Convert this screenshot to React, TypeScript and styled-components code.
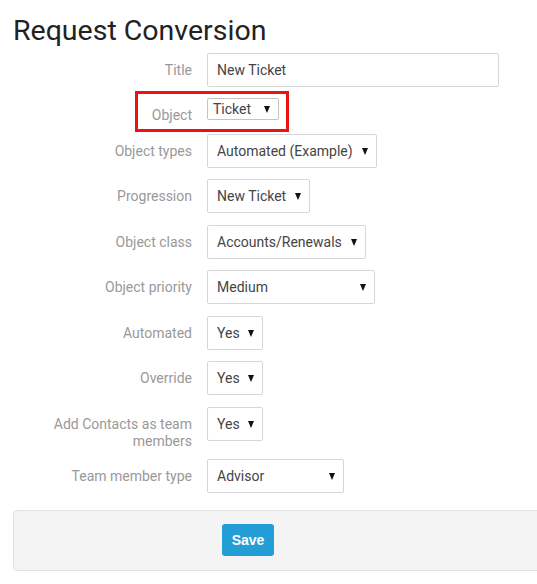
import React from "react";
import styled, { createGlobalStyle } from "styled-components";

const GlobalStyle = createGlobalStyle`
  html, body {
    margin: 0;
    padding: 0;
    background: #ffffff;
    font-family: Roboto, "Liberation Sans", Arial, sans-serif;
    overflow: hidden;
  }
`;

const Page = styled.div`
  width: 537px;
  height: 584px;
  overflow: hidden;
`;

const Heading = styled.h1`
  margin: 0;
  padding: 14px 0 0 13px;
  font-size: 28.5px;
  line-height: 33px;
  font-weight: 400;
  color: #222222;
`;

const Form = styled.form`
  margin-top: 6px;
  display: flex;
  flex-direction: column;
  gap: 11.5px;
`;

const Row = styled.div<{ $pull?: number }>`
  position: relative;
  display: grid;
  grid-template-columns: 192px 1fr;
  column-gap: 15px;
  align-items: start;
  margin-top: ${(p) => -(p.$pull ?? 0)}px;
`;

const Label = styled.label`
  padding-top: 9px;
  margin-bottom: -2px;
  text-align: right;
  font-size: 14px;
  line-height: 17px;
  color: #999999;
`;

const Control = styled.div<{ $w: number; $small?: boolean }>`
  box-sizing: border-box;
  width: ${(p) => p.$w}px;
  height: ${(p) => (p.$small ? 22 : 34)}px;
  display: flex;
  align-items: center;
  justify-content: space-between;
  padding: 0 8px 0 ${(p) => (p.$small ? 5 : 9)}px;
  border: 1px solid ${(p) => (p.$small ? "#c4c4c4" : "#d6d6d6")};
  border-radius: 2px;
  background: #ffffff;
  font-size: 14px;
  color: #444444;
  white-space: nowrap;
`;

const Arrow = styled.span`
  width: 0;
  height: 0;
  border-left: 3.5px solid transparent;
  border-right: 3.5px solid transparent;
  border-top: 7px solid #111111;
  margin-top: 1px;
`;

const Highlight = styled.div`
  position: absolute;
  left: 135px;
  top: -7px;
  width: 154px;
  height: 41px;
  box-sizing: border-box;
  border: 3px solid #ee1111;
  pointer-events: none;
`;

const Actions = styled.div`
  margin: 17px 0 0 13px;
  width: 560px;
  box-sizing: border-box;
  padding: 13px 0 14px 208px;
  background: #f4f4f4;
  border: 1px solid #e2e2e2;
  border-radius: 4px;
`;

const SaveButton = styled.button`
  width: 52px;
  height: 32px;
  border: none;
  border-radius: 3px;
  background: #239dd6;
  color: #ffffff;
  font-family: "Liberation Sans", Arial, sans-serif;
  font-weight: 700;
  font-size: 14px;
  padding: 0;
`;

type Field = { label: string; value: string; width: number };

const fields: Field[] = [
  { label: "Object types", value: "Automated (Example)", width: 170 },
  { label: "Progression", value: "New Ticket", width: 103 },
  { label: "Object class", value: "Accounts/Renewals", width: 159 },
  { label: "Object priority", value: "Medium", width: 168 },
  { label: "Automated", value: "Yes", width: 56 },
  { label: "Override", value: "Yes", width: 56 },
  { label: "Add Contacts as team members", value: "Yes", width: 56 },
  { label: "Team member type", value: "Advisor", width: 137 },
];

export default function App() {
  return (
    <Page>
      <GlobalStyle />
      <Heading>Request Conversion</Heading>
      <Form>
        <Row>
          <Label>Title</Label>
          <Control $w={292}>New Ticket</Control>
        </Row>
        <Row $pull={0.5}>
          <Label>Object</Label>
          <Control $w={72} $small>
            Ticket
            <Arrow />
          </Control>
          <Highlight />
        </Row>
        {fields.map((f) => (
          <Row key={f.label}>
            <Label>{f.label}</Label>
            <Control $w={f.width}>
              {f.value}
              <Arrow />
            </Control>
          </Row>
        ))}
      </Form>
      <Actions>
        <SaveButton type="button">Save</SaveButton>
      </Actions>
    </Page>
  );
}
